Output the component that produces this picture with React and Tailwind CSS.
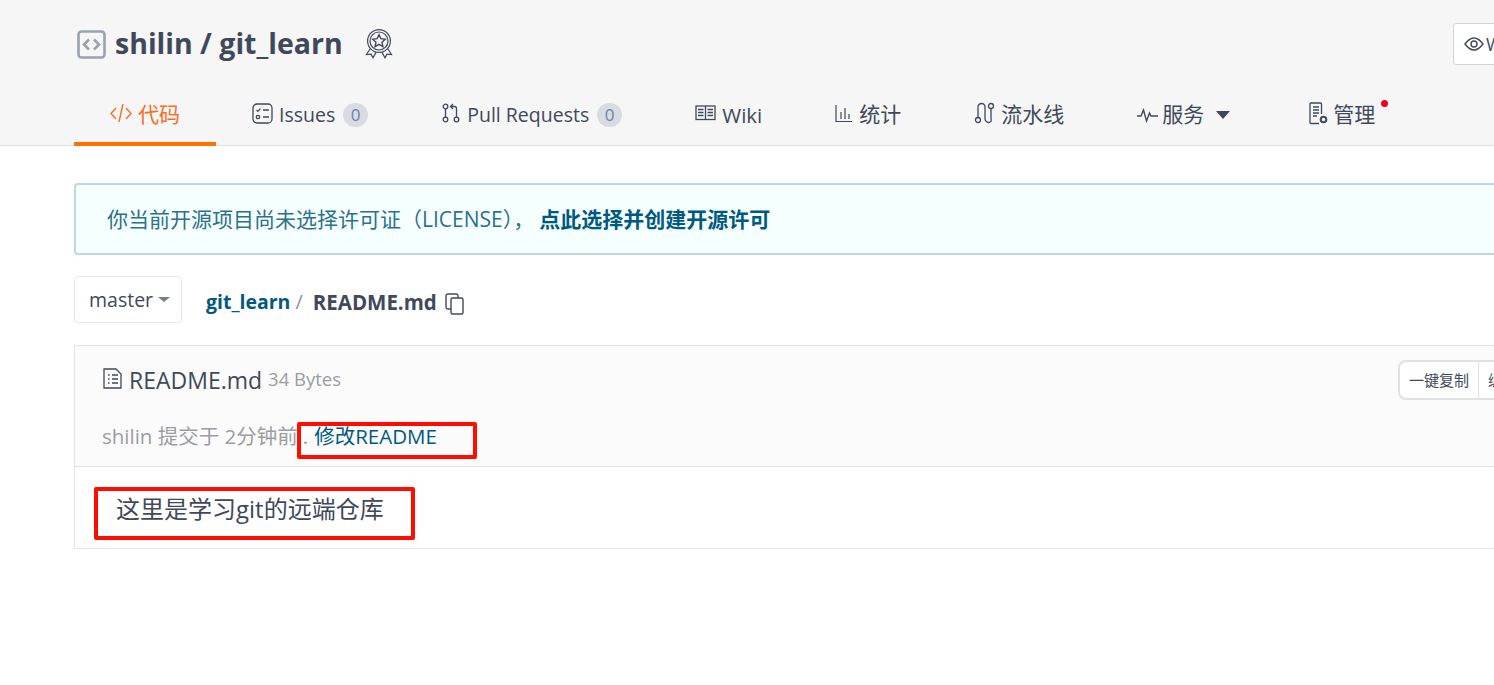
import React from 'react';

const FONT = '[font-family:"Open_Sans","Noto_Sans_CJK_SC",sans-serif]';

const CodeBoxIcon = () => (
  <svg width="29" height="29" viewBox="0 0 29 29" fill="none" stroke="#9aa1b1">
    <rect x="1.5" y="1.5" width="26" height="26" rx="3" strokeWidth="2.6" />
    <path d="M12 9.5l-5 5 5 5M17 9.5l5 5-5 5" strokeWidth="2.6" />
  </svg>
);

const BadgeIcon = () => (
  <svg width="28" height="30" viewBox="0 0 28 30" fill="none" stroke="#40485b" strokeWidth="1.2">
    <circle cx="14" cy="12" r="11.4" />
    <circle cx="14" cy="12" r="9" />
    <path d="M14 5.6l1.9 4.1 4.4.5-3.3 3 .9 4.4-3.9-2.2-3.9 2.2.9-4.4-3.3-3 4.4-.5z" strokeWidth="1.4" />
    <path d="M5 20l-3.5 5.5 4.5-.4 2 3.6 3.2-5.6M23 20l3.5 5.5-4.5-.4-2 3.6-3.2-5.6" />
  </svg>
);

const icons = {
  code: (
    <svg className="-mt-[4px]" width="22" height="20" viewBox="0 0 22 20" fill="none" stroke="#f86e22" strokeWidth="1.4">
      <path d="M6 5L1 10.5 6 16M16 5l5 5.5-5 5.5M13 1L9 19" />
    </svg>
  ),
  issues: (
    <svg className="-mt-[3px]" width="21" height="21" viewBox="0 0 21 21" fill="none" stroke="#40485b" strokeWidth="1.3">
      <rect x="1" y="1" width="19" height="19" rx="4" />
      <path d="M4.5 7l1.4 1.4L8.4 5.6M11 7h6M11 14h6" />
      <circle cx="6" cy="14" r="1.7" />
    </svg>
  ),
  pull: (
    <svg className="-mt-[4px] mr-[1px]" width="18" height="20" viewBox="0 0 18 20" fill="none" stroke="#40485b" strokeWidth="1.3">
      <circle cx="3.5" cy="3.5" r="2.3" />
      <circle cx="3.5" cy="16.5" r="2.3" />
      <circle cx="14.5" cy="16.5" r="2.3" />
      <path d="M3.5 6v8M14.5 14V5.5a2 2 0 0 0-2-2H9M11 1l-2.5 2.5L11 6" />
    </svg>
  ),
  wiki: (
    <svg className="-mt-[4px]" width="21" height="16" viewBox="0 0 21 16" fill="none" stroke="#40485b" strokeWidth="1.3">
      <rect x="1" y="1" width="19" height="13.5" />
      <path d="M10.5 1v13.5M3 4.5h5.5M3 7.5h5.5M3 10.5h5.5M12.5 4.5H18M12.5 7.5H18M12.5 10.5H18" />
    </svg>
  ),
  stats: (
    <svg className="-mt-[4px]" width="18" height="19" viewBox="0 0 18 19" fill="none" stroke="#40485b" strokeWidth="1.2">
      <path d="M1 1v16.5h16M6 8v7M10 4v11M14 10v5" />
    </svg>
  ),
  pipeline: (
    <svg className="-mt-[4px]" width="21" height="22" viewBox="0 0 20 22" fill="none" stroke="#40485b" strokeWidth="1.3">
      <circle cx="3.5" cy="18" r="2.5" />
      <circle cx="16.5" cy="4" r="2.5" />
      <path d="M3.5 15.5V5a3.5 3.5 0 0 1 7 0v12a3.5 3.5 0 0 0 6 2.4 4 4 0 0 0 0-2.4V6.5" />
    </svg>
  ),
  service: (
    <svg className="-mr-[2px] -mt-[1px]" width="21" height="16" viewBox="0 0 21 16" fill="none" stroke="#40485b" strokeWidth="1.4">
      <path d="M0 9h4l2.5-6 3 11 3-8 1.5 3h7" />
    </svg>
  ),
  manage: (
    <svg className="-mr-[2px] -mt-[3px]" width="20" height="23" viewBox="0 0 20 23" fill="none" stroke="#40485b" strokeWidth="1.3">
      <path d="M10 21.5H2a1 1 0 0 1-1-1V2a1 1 0 0 1 1-1h9.5a1 1 0 0 1 1 1v10" />
      <path d="M4 5h6M4 8h6M4 11h6M4 14h4" />
      <circle cx="14.5" cy="17.5" r="2.8" strokeWidth="2" />
    </svg>
  ),
};

const Tab = ({ icon, label, count, active, caret, dot, size = '-mt-[1px] text-[21px]', className = '' }) => (
  <div
    className={`relative flex h-full shrink-0 items-center gap-[6px] px-9 ${active ? 'border-b-4 border-[#ff7200] text-[#f86e22]' : 'pb-[4px] text-[#40485b]'} ${className}`}
  >
    {icons[icon]}
    <span className={`${size} leading-none`}>{label}</span>
    {count !== undefined && (
      <span className="ml-[2px] flex h-[24px] w-[25px] items-center justify-center rounded-full bg-[#d9dbe2] text-[17px] text-[#6d7fa6]">
        {count}
      </span>
    )}
    {caret && <span className="ml-[6px] h-0 w-0 border-x-[7px] border-t-[8px] border-x-transparent border-t-[#40485b]" />}
    {dot && <span className="absolute right-[23px] top-[12px] h-[7px] w-[7px] rounded-full bg-[#f0001f]" />}
  </div>
);

export default function App() {
  return (
    <div className={`h-[685px] w-[1494px] overflow-hidden bg-white ${FONT}`}>
      <header className="h-[146px] border-b border-[#dfe1e5] bg-[#f6f6f6] pl-[74px]">
        <div className="flex h-[88px] items-center">
          <div className="ml-[3px] flex items-center gap-[9px]">
            <CodeBoxIcon />
            <h1 className="-mt-[2px] text-[28.5px] font-bold leading-none text-[#40485b]">shilin / git_learn</h1>
            <span className="ml-[13px]"><BadgeIcon /></span>
          </div>
          <div className="ml-auto flex h-[42px] w-[60px] -translate-x-[-19px] items-center gap-[2px] rounded-[3px] border border-[#d0d3da] bg-white pl-[10px] text-[18px] text-[#40485b]">
            <svg width="20" height="14" viewBox="0 0 20 14" fill="none" stroke="#40485b" strokeWidth="1.4">
              <path d="M1 7c3-4 6-6 9-6s6 2 9 6c-3 4-6 6-9 6s-6-2-9-6z" />
              <circle cx="10" cy="7" r="3" />
            </svg>
            <span>W</span>
          </div>
        </div>
        <nav className="flex h-[58px]">
          <Tab icon="code" label="代码" active />
          <Tab icon="issues" label="Issues" count="0" size="text-[19.5px]" />
          <Tab icon="pull" label="Pull Requests" count="0" size="text-[19.5px]" className="ml-[2px]" />
          <Tab icon="wiki" label="Wiki" size="text-[20.5px]" className="ml-[1px]" />
          <Tab icon="stats" label="统计" className="ml-[1px]" />
          <Tab icon="pipeline" label="流水线" className="ml-[1px]" />
          <Tab icon="service" label="服务" caret className="ml-[1px]" />
          <Tab icon="manage" label="管理" dot className="ml-[7px]" />
        </nav>
      </header>

      <main className="w-[1600px] pl-[74px] pt-[37px]">
        <div className="flex h-[72px] items-center rounded-[4px] border-2 border-[#bcd8df] bg-[#f6ffff] pl-[31px] pt-[1px] text-[21px] text-[#2b7189]">
          <span>你当前开源项目尚未选择许可证（LICENSE），</span>
          <b className="ml-[5px] font-bold text-[#005980]">点此选择并创建开源许可</b>
        </div>

        <div className="mt-[21px] flex h-[47px] items-center">
          <div className="flex h-[47px] w-[108px] items-center rounded-[4px] border border-[#e3e5e9] pl-[14px] text-[19.5px] text-[#40485b]">
            master
            <span className="ml-[5px] h-0 w-0 border-x-[6px] border-t-[5px] border-x-transparent border-t-[#767d8c]" />
          </div>
          <div className="ml-[24px] flex items-center pt-[5px] font-bold">
            <span className="text-[19.5px] text-[#005980]">git_learn</span>
            <span className="ml-[5px] text-[20px] font-normal text-[#8c92a4]">/</span>
            <span className="ml-[10px] text-[20.5px] text-[#40485b]">README.md</span>
            <svg className="ml-[8px] mt-[4px]" width="19" height="22" viewBox="0 0 19 22" fill="none" stroke="#40485b" strokeWidth="1.4">
              <rect x="6" y="5" width="12" height="16" rx="1.5" />
              <path d="M6 16H3a2 2 0 0 1-2-2V3a2 2 0 0 1 2-2h8a2 2 0 0 1 2 2v2" />
            </svg>
          </div>
        </div>

        <section className="mt-[22px] border border-[#e3e5e9]">
          <div className="relative h-[121px] border-b border-[#dce1e8] bg-[#fbfbfc] pl-[27px] pt-[23px]">
            <div className="flex items-center gap-[6px] leading-none">
              <svg className="-mt-[4px] ml-[1px] mr-[1px]" width="19" height="21" viewBox="0 0 19 21" fill="none" stroke="#40485b" strokeWidth="1.3">
                <path d="M1 1h12l5 5v14H1z" />
                <path d="M5 7h1.5M9 7h6M5 11h1.5M9 11h6M5 15h1.5M9 15h6" />
              </svg>
              <span className="text-[23px] text-[#40485b]">README.md</span>
              <span className="-mt-[2px] text-[18.5px] text-[#9b9da3]">34 Bytes</span>
            </div>
            <div className="mt-[34px] flex items-center text-[20.5px] leading-none text-[#9b9da3]">
              <span>shilin 提交于 2分钟前</span>
              <span className="ml-[5px]">.</span>
              <span className="ml-[6px] text-[#005980]">修改README</span>
            </div>
            <div className="absolute left-[1323px] top-[14px] flex h-[40px] items-center rounded-[8px] border-2 border-[#e0e1e4] bg-white text-[15px] text-[#40485b]">
              <span className="border-r border-[#e0e1e4] px-[9px] leading-[36px]">一键复制</span>
              <span className="px-[9px]">编辑</span>
            </div>
          </div>
          <div className="h-[81px] pl-[41px] pt-[30px] text-[24px] leading-none text-[#40485b]">
            这里是学习git的远端仓库
          </div>
        </section>
      </main>

      <div className="absolute left-[297px] top-[422px] h-[37px] w-[180px] rounded-[2px] border-[4px] border-[#fe0e00]" />
      <div className="absolute left-[94px] top-[487px] h-[53px] w-[321px] rounded-[2px] border-[4px] border-[#fe0e00]" />
    </div>
  );
}
